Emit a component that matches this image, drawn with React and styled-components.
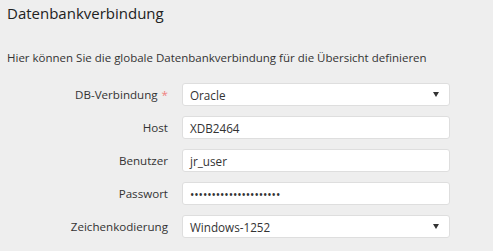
import React from "react";
import styled, { createGlobalStyle } from "styled-components";

const Global = createGlobalStyle`
  html, body { margin: 0; padding: 0; background: #eeeeee; }
  body { font-family: "Open Sans", "Noto Sans", sans-serif; color: #333; }
`;

const Page = styled.div`
  width: 493px;
  height: 251px;
  box-sizing: border-box;
  padding: 3px 7px 0 7px;
  overflow: hidden;
`;

const Title = styled.h2`
  margin: 0;
  font-size: 15px;
  font-weight: 500;
  line-height: 21px;
  color: #222;
`;

const Intro = styled.p`
  margin: 25px 0 0 0;
  font-size: 11.5px;
  line-height: 18px;
  color: #333;
`;

const Form = styled.div`
  margin-top: 16px;
  display: flex;
  flex-direction: column;
  gap: 10px;
`;

const Row = styled.div`
  display: grid;
  grid-template-columns: 161px 268px;
  column-gap: 14px;
  align-items: center;
`;

const Label = styled.label`
  text-align: right;
  font-size: 11.6px;
  color: #333;
  white-space: nowrap;
`;

const Required = styled.span`
  color: #f08080;
  margin-left: 4px;
`;

const Field = styled.div`
  height: 23px;
  box-sizing: border-box;
  background: #fff;
  border: 1px solid #dedede;
  border-radius: 3px;
  display: flex;
  align-items: center;
  padding: 0 8px 0 7px;
  font-size: 11.7px;
  color: #333;
`;

const Value = styled.span`
  flex: 1;
  letter-spacing: ${(p) => (p.$dots ? "-0.1px" : "0")};
`;

const Arrow = styled.span`
  width: 0;
  height: 0;
  border-left: 3px solid transparent;
  border-right: 3px solid transparent;
  border-top: 5px solid #333;
  margin-right: 2px;
`;

const rows = [
  { label: "DB-Verbindung", required: true, value: "Oracle", select: true },
  { label: "Host", value: "XDB2464" },
  { label: "Benutzer", value: "jr_user" },
  { label: "Passwort", value: "•••••••••••••••••••••", dots: true },
  { label: "Zeichenkodierung", value: "Windows-1252", select: true },
];

export default function App() {
  return (
    <>
      <Global />
      <Page>
        <Title>Datenbankverbindung</Title>
        <Intro>Hier können Sie die globale Datenbankverbindung für die Übersicht definieren</Intro>
        <Form>
          {rows.map((r) => (
            <Row key={r.label}>
              <Label>
                {r.label}
                {r.required && <Required>*</Required>}
              </Label>
              <Field>
                <Value $dots={r.dots}>{r.value}</Value>
                {r.select && <Arrow />}
              </Field>
            </Row>
          ))}
        </Form>
      </Page>
    </>
  );
}
